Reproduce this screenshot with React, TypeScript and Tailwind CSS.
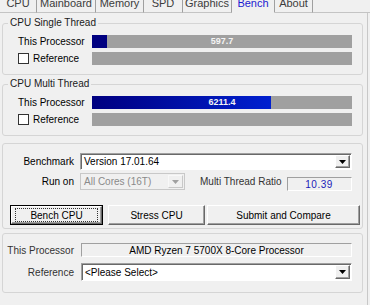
const tabs = [
  { label: 'CPU', width: 'w-[37px]' },
  { label: 'Mainboard', width: 'w-[59px]' },
  { label: 'Memory', width: 'w-[48px]' },
  { label: 'SPD', width: 'w-[39px]' },
  { label: 'Graphics', width: 'w-[49px]' },
  { label: 'Bench', width: 'w-[43px]', active: true },
  { label: 'About', width: 'w-[38px]' },
];

function TabStrip() {
  return (
    <div className="flex h-[13px]">
      {tabs.map((t) => (
        <div
          key={t.label}
          className={`${t.width} flex h-[13px] justify-center overflow-hidden border-r border-[#a0a0a0] text-[11px] leading-[7px] ${
            t.active ? 'border-b border-b-transparent text-[#1a1ad0]' : 'border-b border-b-[#c4c4c4] text-[#3c3c3c]'
          }`}
        >
          {t.label}
        </div>
      ))}
      <div className="h-[13px] flex-1 border-b border-[#c4c4c4]" />
    </div>
  );
}

function Arrow({ disabled }: { disabled?: boolean }) {
  return (
    <div
      className={`flex h-full w-[15px] items-center justify-center border bg-[#f0f0f0] ${
        disabled
          ? 'border-t-[#f8f8f8] border-l-[#f8f8f8] border-r-[#c8c8c8] border-b-[#c8c8c8]'
          : 'border-t-white border-l-white border-r-[#696969] border-b-[#696969] shadow-[inset_-1px_-1px_0_#a0a0a0]'
      }`}
    >
      <svg width="7" height="4" viewBox="0 0 7 4">
        <polygon points="0,0 7,0 3.5,4" fill={disabled ? '#a0a0a0' : '#000'} />
      </svg>
    </div>
  );
}

function Bar({ fill, value, multi }: { fill?: number; value?: string; multi?: boolean }) {
  return (
    <div className="relative h-[13px] w-[260px] bg-[#a0a0a0]">
      {fill ? (
        <div
          className={`h-full ${multi ? 'bg-linear-to-r from-[#000080] to-[#0020d0]' : 'bg-[#000080]'}`}
          style={{ width: fill }}
        />
      ) : null}
      {value && (
        <div className="absolute inset-0 flex items-center justify-center text-[9px] font-bold leading-none text-[#f4f4f4]">
          {value}
        </div>
      )}
    </div>
  );
}

function ScoreGroup({ title, fill, value, multi }: { title: string; fill: number; value: string; multi?: boolean }) {
  return (
    <fieldset className="w-[361px] rounded-[3px] border border-[#d5d5d5]">
      <legend className="ml-[5px] px-[2px] leading-[12px] text-[#1a1a1a]">{title}</legend>
      <div className="flex flex-col pb-[9px] pl-[15px] pt-[6px]">
        <div className="flex h-[13px] items-center">
          <span className="w-[74px]">This Processor</span>
          <Bar fill={fill} value={value} multi={multi} />
        </div>
        <div className="mt-[4px] flex h-[13px] items-center">
          <div className="flex w-[74px] items-center gap-[4px]">
            <span className="h-[11px] w-[11px] border border-[#333] bg-white" />
            <span>Reference</span>
          </div>
          <Bar />
        </div>
      </div>
    </fieldset>
  );
}

function Button({ label, width, isDefault }: { label: string; width: string; isDefault?: boolean }) {
  if (isDefault) {
    return (
      <div className={`${width} h-[20px] border border-black bg-[#f0f0f0]`}>
        <div className="h-full w-full border border-t-white border-l-white border-r-[#696969] border-b-[#696969] px-[3px] py-[1px] shadow-[inset_-1px_-1px_0_#a0a0a0]">
          <div className="flex h-full w-full items-center justify-center border border-dotted border-[#333]">{label}</div>
        </div>
      </div>
    );
  }
  return (
    <div
      className={`${width} flex h-[20px] items-center justify-center border border-t-white border-l-white border-r-[#696969] border-b-[#696969] bg-[#f0f0f0] shadow-[inset_-1px_-1px_0_#a0a0a0]`}
    >
      {label}
    </div>
  );
}

export default function App() {
  return (
    <div className="h-[305px] w-[370px] overflow-hidden bg-[#f0f0f0] font-['Liberation_Sans',Arial,sans-serif] text-[10px] text-black">
      <TabStrip />
      <div className="flex h-[292px] w-[368px] flex-col border-r border-[#c8c8c8] pl-[2px]">
        <div className="mt-[4px]">
          <ScoreGroup title="CPU Single Thread" fill={15} value="597.7" />
        </div>
        <div className="mt-[3px]">
          <ScoreGroup title="CPU Multi Thread" fill={179} value="6211.4" multi />
        </div>

        <fieldset className="mt-[7px] w-[361px] rounded-[3px] border border-[#d5d5d5]">
          <div className="flex flex-col pb-[3px] pt-[9px]">
            <div className="flex h-[17px] items-center">
              <span className="w-[71px] text-right">Benchmark</span>
              <div className="ml-[6px] flex h-[17px] w-[272px] items-center border border-t-[#a0a0a0] border-l-[#a0a0a0] border-r-white border-b-white bg-white p-[1px] shadow-[inset_1px_1px_0_#696969]">
                <span className="flex-1 pl-[2px]">Version 17.01.64</span>
                <Arrow />
              </div>
            </div>
            <div className="mt-[3px] flex h-[17px] items-start">
              <span className="flex h-[17px] w-[71px] items-center justify-end">Run on</span>
              <div className="ml-[6px] flex h-[17px] w-[105px] items-center border border-[#c8c8c8] bg-[#f0f0f0] p-[1px] text-[#8a8a8a]">
                <span className="flex-1 pl-[2px]">All Cores (16T)</span>
                <Arrow disabled />
              </div>
              <span className="ml-[15px] flex h-[17px] items-center text-[#333]">Multi Thread Ratio</span>
              <div className="ml-[5px] mt-[4px] flex h-[14px] w-[65px] items-center justify-center border border-t-[#a0a0a0] border-l-[#a0a0a0] border-r-white border-b-white tracking-[0.5px] text-[#1a1ab8]">
                10.39
              </div>
            </div>
            <div className="mt-[15px] flex pl-[7px]">
              <Button label="Bench CPU" width="w-[93px]" isDefault />
              <div className="ml-[5px]">
                <Button label="Stress CPU" width="w-[97px]" />
              </div>
              <div className="ml-[2px]">
                <Button label="Submit and Compare" width="w-[153px]" />
              </div>
            </div>
          </div>
        </fieldset>

        <fieldset className="mt-[4px] w-[361px] rounded-[3px] border border-[#d5d5d5]">
          <div className="flex flex-col pb-[11px] pt-[9px]">
            <div className="flex h-[14px] items-center">
              <span className="w-[71px] text-right text-[#333]">This Processor</span>
              <div className="ml-[7px] flex h-[14px] w-[271px] items-center justify-center border border-t-[#a0a0a0] border-l-[#a0a0a0] border-r-white border-b-white">
                AMD Ryzen 7 5700X 8-Core Processor
              </div>
            </div>
            <div className="mt-[6px] flex h-[18px] items-center">
              <span className="w-[71px] text-right text-[#333]">Reference</span>
              <div className="ml-[7px] flex h-[18px] w-[271px] items-center border border-t-[#a0a0a0] border-l-[#a0a0a0] border-r-white border-b-white bg-white p-[1px] shadow-[inset_1px_1px_0_#696969]">
                <span className="flex-1 pl-[2px]">&lt;Please Select&gt;</span>
                <Arrow />
              </div>
            </div>
          </div>
        </fieldset>
      </div>
    </div>
  );
}
